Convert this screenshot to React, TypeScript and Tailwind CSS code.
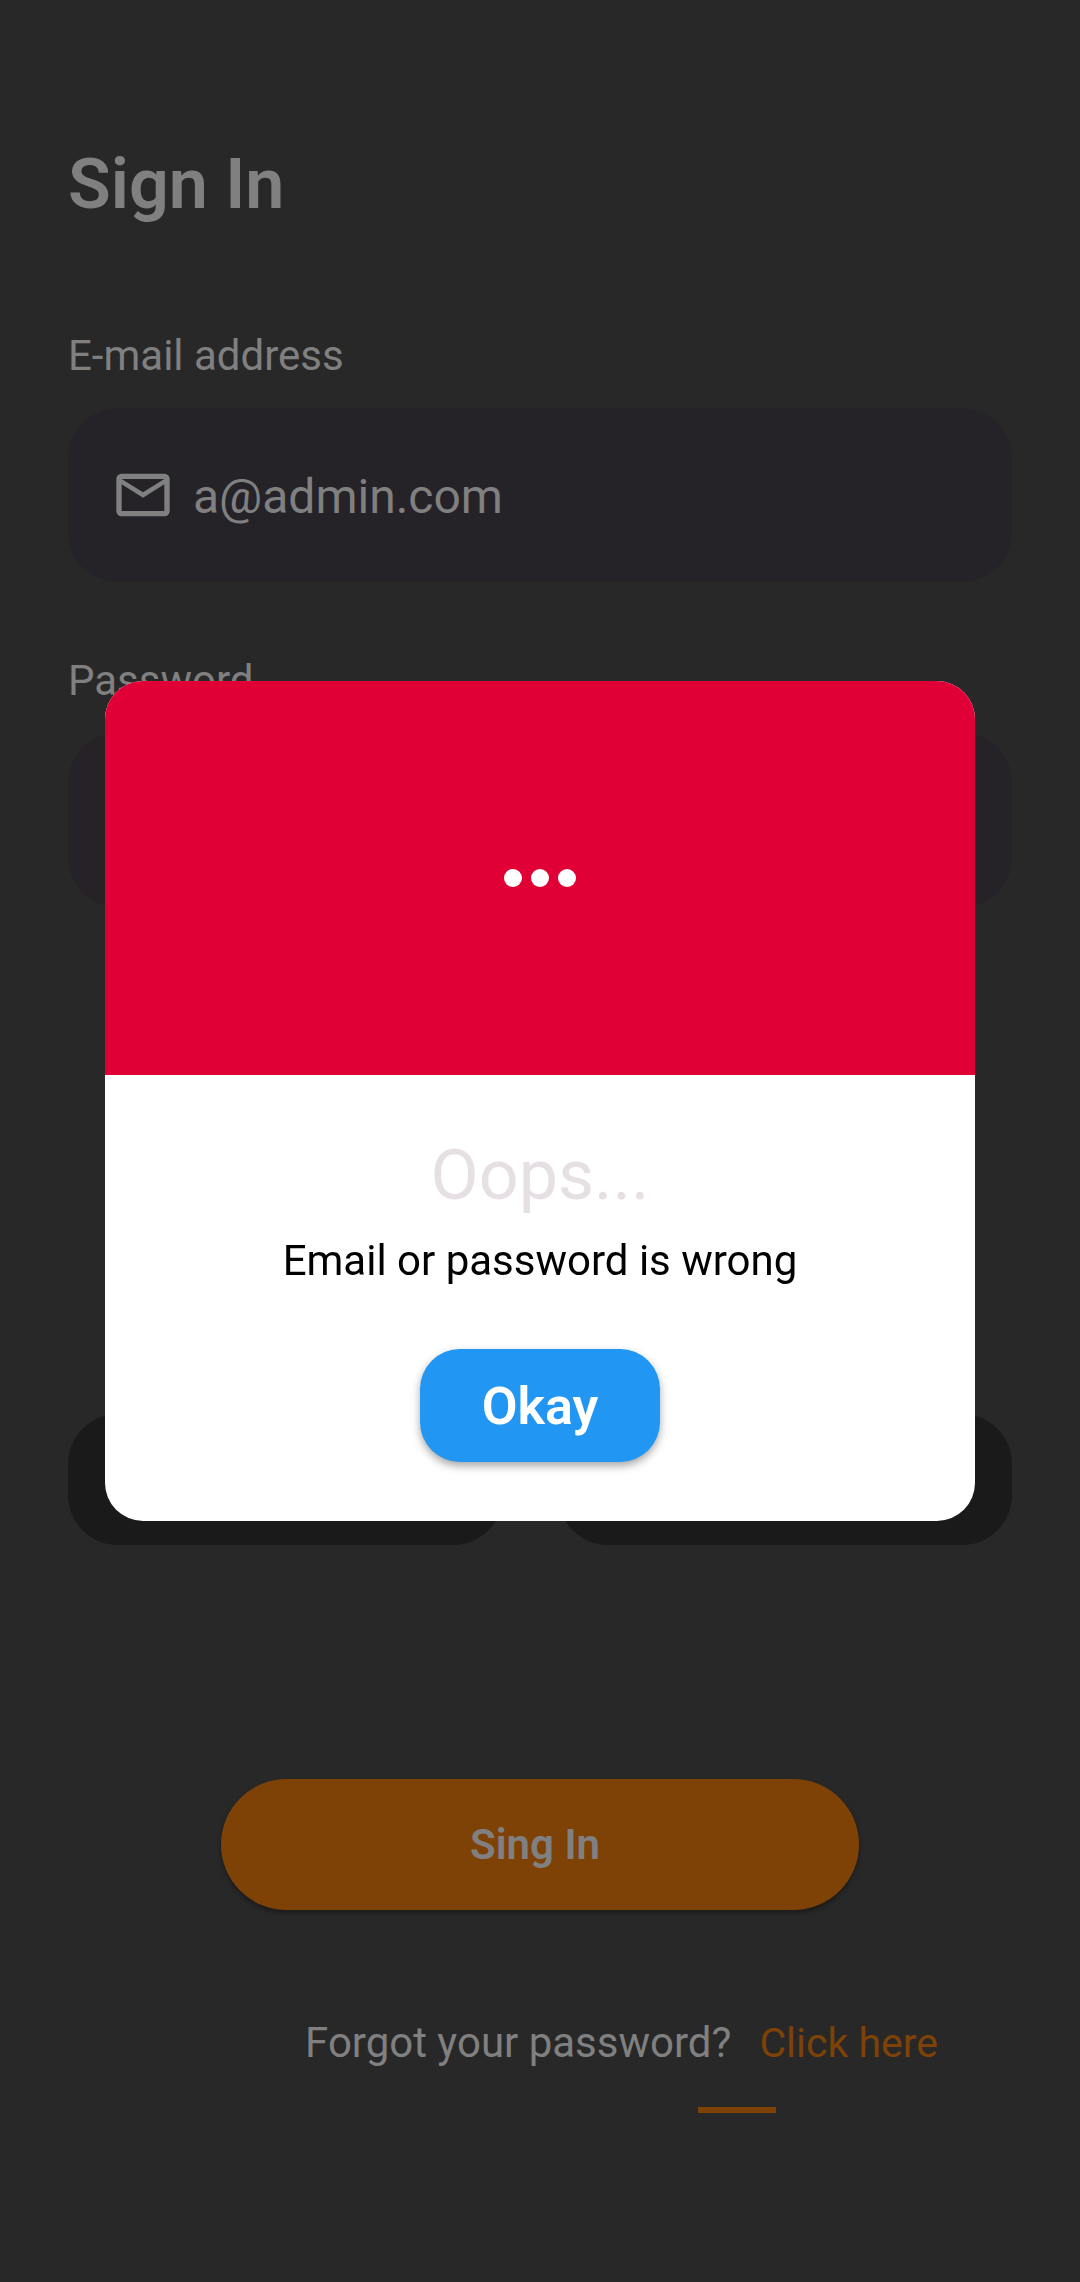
import { useState } from "react";

const labelText = "text-[42px] leading-[48px]";

function MailIcon() {
  return (
    <svg
      viewBox="0 0 24 24"
      className="size-16 shrink-0 fill-current"
      aria-hidden="true"
    >
      <path d="M22 6c0-1.1-.9-2-2-2H4c-1.1 0-2 .9-2 2v12c0 1.1.9 2 2 2h16c1.1 0 2-.9 2-2V6zm-2 0l-8 5-8-5h16zm0 12H4V8l8 5 8-5v10z" />
    </svg>
  );
}

function ErrorDialog({ onClose }: { onClose: () => void }) {
  return (
    <div className="fixed inset-0 flex items-center justify-center px-[105px] pb-20">
      <section
        role="alertdialog"
        aria-labelledby="dialog-title"
        aria-describedby="dialog-message"
        className="w-full overflow-hidden rounded-[38px] bg-white text-center"
      >
        <div className="flex h-[394px] items-center justify-center gap-[9px] bg-[#e00036]">
          <span className="size-[18px] rounded-full bg-white" />
          <span className="size-[18px] rounded-full bg-white" />
          <span className="size-[18px] rounded-full bg-white" />
        </div>
        <div className="flex flex-col items-center pt-[60px] pb-[59px]">
          <h2 id="dialog-title" className="text-[70px] leading-[80px] text-[#e6e0e4]">
            Oops...
          </h2>
          <p id="dialog-message" className="mt-[22px] text-[42px] leading-[48px] text-black">
            Email or password is wrong
          </p>
          <button
            type="button"
            onClick={onClose}
            className="mt-16 h-[113px] w-60 rounded-[40px] bg-[#2196f3] pt-0.5 text-[52px] leading-[60px] font-semibold text-white shadow-[0_4px_8px_rgba(0,0,0,0.35)]"
          >
            Okay
          </button>
        </div>
      </section>
    </div>
  );
}

export default function App() {
  const [open, setOpen] = useState(true);
  const [email, setEmail] = useState("a@admin.com");
  const [password, setPassword] = useState("");

  return (
    <div className="min-h-screen bg-[#282828] font-[Roboto,sans-serif] text-[#808080]">
      <main className="px-[68px] pt-36 pb-40">
        <h1 className="text-[70px] leading-[80px] font-semibold">Sign In</h1>

        <form onSubmit={(e) => e.preventDefault()}>
          <label htmlFor="email" className={`mt-[108px] block ${labelText}`}>
            E-mail address
          </label>
          <div className="mt-7 flex h-[174px] items-center gap-[18px] rounded-[50px] bg-[#252328] px-[43px]">
            <MailIcon />
            <input
              id="email"
              type="email"
              value={email}
              onChange={(e) => setEmail(e.target.value)}
              className="min-w-0 flex-1 bg-transparent pt-1 text-[48px] leading-[56px] outline-none"
            />
          </div>

          <label htmlFor="password" className={`mt-[75px] block ${labelText}`}>
            Password
          </label>
          <div className="mt-7 flex h-[174px] items-center rounded-[50px] bg-[#252328] px-[43px]">
            <input
              id="password"
              type="password"
              value={password}
              onChange={(e) => setPassword(e.target.value)}
              className="min-w-0 flex-1 bg-transparent pt-1 text-[48px] leading-[56px] outline-none"
            />
          </div>

          <div className="mt-[507px] grid grid-cols-[435fr_454fr] gap-[55px]">
            <button
              type="button"
              aria-label="First sign-in option"
              className="h-[131px] rounded-[50px] bg-[#1a1a1a]"
            />
            <button
              type="button"
              aria-label="Second sign-in option"
              className="h-[131px] rounded-[50px] bg-[#1a1a1a]"
            />
          </div>

          <div className="mt-[234px] px-[153px]">
            <button
              type="submit"
              className="h-[131px] w-full rounded-full bg-[#7e4207] pr-2.5 text-[42px] leading-[48px] font-semibold shadow-[0_3px_5px_rgba(0,0,0,0.35)]"
            >
              Sing In
            </button>
          </div>
        </form>

        <div className={`mt-[109px] flex justify-end gap-7 pr-[74px] ${labelText}`}>
          <p>Forgot your password?</p>
          <a href="#reset" className="text-[41px] text-[#7e4207]">
            Click here
          </a>
        </div>
        <div className="mt-10 mr-[236px] ml-auto h-1.5 w-[78px] bg-[#7e4207]" />
      </main>

      {open && <ErrorDialog onClose={() => setOpen(false)} />}
    </div>
  );
}
